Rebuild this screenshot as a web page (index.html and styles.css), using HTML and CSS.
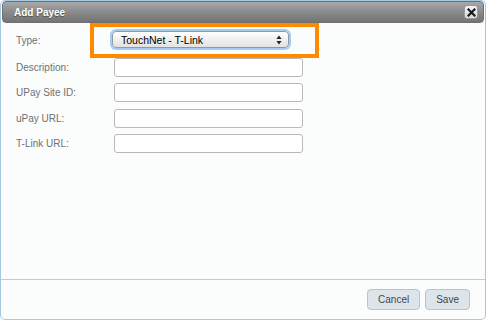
FILE: index.html
```html
<!DOCTYPE html>
<html lang="en">
<head>
  <meta charset="UTF-8">
  <title>Add Payee</title>
  <link rel="stylesheet" href="styles.css">
</head>
<body>
  <div class="dialog">
    <div class="titlebar">
      <span class="title">Add Payee</span>
      <button class="close" title="Close">
        <svg width="9" height="9" viewBox="0 0 9 9">
          <path d="M1.5 1.5 L7.5 7.5 M7.5 1.5 L1.5 7.5" stroke="#1a1a1a" stroke-width="2.2" stroke-linecap="square"/>
        </svg>
      </button>
    </div>

    <div class="content">
      <div class="highlight"></div>
      <form class="form">
        <label>Type:</label>
        <div class="select">
          <span>TouchNet - T-Link</span>
          <svg width="6" height="10" viewBox="0 0 6 10">
            <path d="M3 0.5 L5.6 4 H0.4 Z M3 9.5 L5.6 6 H0.4 Z" fill="#222"/>
          </svg>
        </div>

        <label>Description:</label>
        <input type="text">

        <label>UPay Site ID:</label>
        <input type="text">

        <label>uPay URL:</label>
        <input type="text">

        <label>T-Link URL:</label>
        <input type="text">
      </form>
    </div>

    <div class="buttonpane">
      <button class="btn">Cancel</button>
      <button class="btn">Save</button>
    </div>
  </div>
</body>
</html>
```

FILE: styles.css
```css
body {
  margin: 0;
  background: #ffffff;
  font-family: 'Liberation Sans', Arial, sans-serif;
}
.dialog {
  width: 486px;
  height: 320px;
  box-sizing: border-box;
  border: 1px solid #a6c9e2;
  border-bottom-color: #b9c6d2;
  border-radius: 5px;
  background: #fbfdfd;
  padding: 0 1px;
  display: flex;
  flex-direction: column;
}
.titlebar {
  height: 22px;
  box-sizing: border-box;
  border: 1px solid #6f6f6f;
  border-radius: 4px;
  background: linear-gradient(#a9a9a9, #8a8a8a 50%, #747474);
  display: flex;
  align-items: center;
  justify-content: space-between;
  padding: 0 5px 0 11px;
}
.title {
  color: #ffffff;
  font-size: 10px;
  font-weight: bold;
  text-shadow: 0 1px 1px #4a4a4a;
}
.close {
  width: 14px;
  height: 14px;
  padding: 0;
  border: 1px solid #9a9a9a;
  border-radius: 3px;
  background: linear-gradient(#f2f2f2, #dcdcdc);
  display: flex;
  align-items: center;
  justify-content: center;
}
.content {
  flex: 1;
  position: relative;
  padding: 9px 0 0 14px;
}
.highlight {
  position: absolute;
  left: 88px;
  top: 0;
  width: 221px;
  height: 27px;
  border: 4px solid #ff8a00;
}
.form {
  display: grid;
  grid-template-columns: 98px 189px;
  grid-template-rows: 19px 19px 19px 19px 19px;
  row-gap: 6.5px;
  align-items: center;
  margin: 0;
}
.form label {
  color: #707070;
  font-size: 10px;
}
.select {
  position: relative;
  left: -2px;
  width: 177px;
  height: 17px;
  margin-bottom: 4px;
  box-sizing: border-box;
  border: 1px solid #8e9aa6;
  border-radius: 4px;
  background: linear-gradient(#ffffff, #f0f0f0 50%, #e2e2e2);
  box-shadow: 0 0 0 2px #a5cdf4;
  display: flex;
  align-items: center;
  justify-content: space-between;
  padding: 0 6px 0 8px;
  font-size: 10.5px;
  color: #000000;
}
.form label:first-child {
  margin-bottom: 3px;
}
.form input {
  width: 189px;
  height: 19px;
  box-sizing: border-box;
  border: 1px solid #b9b9b9;
  border-radius: 3px;
  background: #ffffff;
  margin: 0;
}
.buttonpane {
  border-top: 1px solid #b7cfe2;
  height: 38px;
  display: flex;
  justify-content: flex-end;
  align-items: center;
  gap: 5px;
  padding: 0 15px 1px 0;
  margin: 0 -1px;
}
.btn {
  height: 21px;
  padding: 0 10px;
  border: 1px solid #b7c4d0;
  border-radius: 4px;
  background: #dde4ea;
  color: #444444;
  font-family: 'Liberation Sans', Arial, sans-serif;
  font-size: 10px;
}
```
